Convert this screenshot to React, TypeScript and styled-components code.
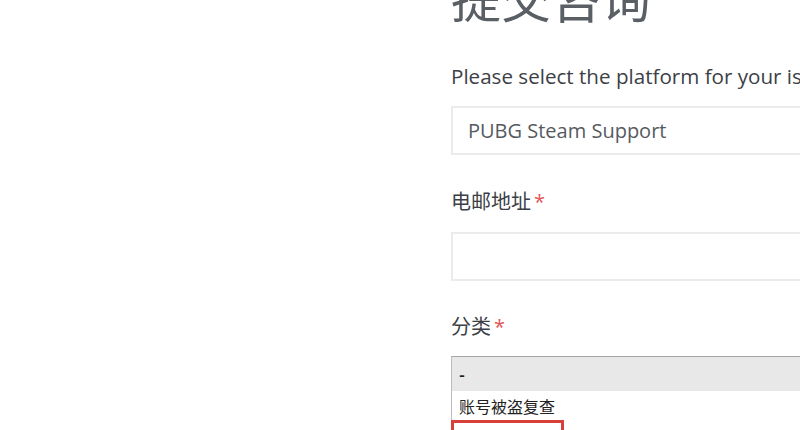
import React from "react";
import styled, { createGlobalStyle } from "styled-components";

const Global = createGlobalStyle`
  html, body { margin: 0; padding: 0; background: #ffffff; }
  body { width: 800px; height: 430px; overflow: hidden; }
`;

const Page = styled.div`
  width: 800px;
  height: 430px;
  overflow: hidden;
  display: grid;
  grid-template-columns: 451px 600px;
  font-family: "Open Sans", "Noto Sans CJK SC", sans-serif;
`;

const Form = styled.div`
  display: flex;
  flex-direction: column;
  margin-top: -29px;
`;

const Title = styled.h1`
  margin: 0;
  font-family: "Noto Sans CJK SC", sans-serif;
  font-weight: 400;
  font-size: 50px;
  line-height: 50px;
  color: #5a5f66;
  letter-spacing: 0;
`;

const Label = styled.div<{ $top: number; $size?: number }>`
  margin-top: ${(p) => p.$top}px;
  font-size: ${(p) => p.$size ?? 20}px;
  line-height: 28px;
  height: 28px;
  color: #3c4046;
  white-space: nowrap;
`;

const Star = styled.span`
  color: #e25555;
  margin-left: 3px;
`;

const Input = styled.div<{ $top: number }>`
  margin-top: ${(p) => p.$top}px;
  box-sizing: border-box;
  height: 49px;
  border: 2px solid #ebebeb;
  display: flex;
  align-items: center;
  padding: 0 15px;
  font-size: 20px;
  color: #555a60;
  white-space: nowrap;
`;

const List = styled.div`
  margin-top: 15px;
  border-top: 1px solid #a6a6a6;
  border-left: 1px solid #bdbdbd;
  display: flex;
  flex-direction: column;
  font-family: "Noto Sans CJK SC", sans-serif;
  font-size: 16px;
  color: #222;
`;

const Option = styled.div<{ $selected?: boolean; $h: number }>`
  height: ${(p) => p.$h}px;
  display: flex;
  align-items: center;
  padding: 0 7px;
  background: ${(p) => (p.$selected ? "#e8e8e8" : "#ffffff")};
  font-weight: ${(p) => (p.$selected ? 700 : 400)};
`;

const MarkedOption = styled.div`
  height: 30px;
  display: flex;
  align-items: flex-start;
`;

const Marker = styled.div`
  margin-left: -1px;
  width: 113px;
  height: 24px;
  box-sizing: border-box;
  border: 3px solid #d8403c;
  border-bottom: none;
`;

export default function App() {
  return (
    <>
      <Global />
      <Page>
        <div />
        <Form>
          <Title>提交咨询</Title>
          <Label $top={41} $size={20.6}>
            Please select the platform for your issue
          </Label>
          <Input $top={16}>PUBG Steam Support</Input>
          <Label $top={33}>
            电邮地址<Star>*</Star>
          </Label>
          <Input $top={16} />
          <Label $top={32}>
            分类<Star>*</Star>
          </Label>
          <List>
            <Option $selected $h={34}>-</Option>
            <Option $h={29}>账号被盗复查</Option>
            <MarkedOption>
              <Marker />
            </MarkedOption>
          </List>
        </Form>
      </Page>
    </>
  );
}
